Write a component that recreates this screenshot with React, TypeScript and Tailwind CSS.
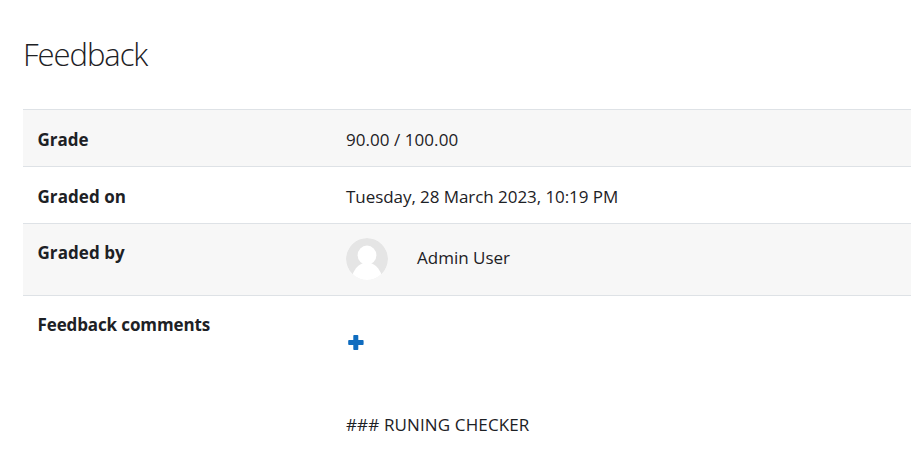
import type { ReactNode } from "react";

function Row({ label, labelClass, shaded, height, children }: {
  label: string;
  labelClass: string;
  shaded?: boolean;
  height: string;
  children: ReactNode;
}) {
  return (
    <tr className={`border-t border-[#dee2e6] align-top ${height} ${shaded ? "bg-[#f7f7f7]" : "bg-white"}`}>
      <th scope="row" className={`w-[308px] pl-[14.5px] text-left font-bold whitespace-nowrap ${labelClass}`}>
        {label}
      </th>
      <td className="pt-[17px] pl-[15px] whitespace-nowrap">{children}</td>
    </tr>
  );
}

function Avatar() {
  return (
    <svg viewBox="0 0 42 42" className="h-[42px] w-[42px] rounded-full">
      <circle cx="21" cy="21" r="21" fill="#e5e5e5" />
      <ellipse cx="21" cy="17.2" rx="9.4" ry="9.6" fill="#fff" />
      <path d="M6.5 36.5C9 30 13.5 26 17 25.2h8c3.5.8 8 4.8 10.5 11.3A21 21 0 0 1 6.5 36.5Z" fill="#fff" />
    </svg>
  );
}

function PlusIcon() {
  return (
    <svg viewBox="0 0 16 15" className="h-[15px] w-4 fill-[#0f6cbf]">
      <path d="M6.1 0h3.4q.8 0 .8.8V5h4.400q.9 0 .9.8v3.400q0 .8-.9.8h-4.400v4.200q0 .8-.8.8H6.100q-.8 0-.8-.8V10H1.100q-.9 0-.9-.8V5.800q0-.8.9-.8h4.200V.8q0-.8.8-.8Z" />
    </svg>
  );
}

export default function App() {
  return (
    <main className="h-[467px] overflow-hidden bg-white pt-[33px] pl-[23px] font-['Open_Sans','Noto_Sans',sans-serif] text-[17px] leading-[26px] text-[#1d2125]">
      <h3 className="h-[76px] text-[31px] leading-[42px] font-light tracking-[-1.05px]">Feedback</h3>
      <table className="w-full table-fixed border-collapse">
        <tbody>
          <Row label="Grade" labelClass="pt-[17px]" height="h-[57px]" shaded>
            <span className="tracking-[0.05px]">90.00 / 100.00</span>
          </Row>
          <Row label="Graded on" labelClass="pt-[17px] tracking-[0.06px]" height="h-[57px]">
            <span className="tracking-[-0.06px]">Tuesday, 28 March 2023, 10:19 PM</span>
          </Row>
          <Row label="Graded by" labelClass="pt-4 tracking-[0.06px]" height="h-[72px]" shaded>
            <div className="-mt-[3px] flex items-center gap-[29px]">
              <Avatar />
              <span className="-mt-0.5">Admin User</span>
            </div>
          </Row>
          <Row label="Feedback comments" labelClass="pt-4 tracking-[-0.12px]" height="h-[172px]">
            <div className="flex h-[60px] items-start pt-[22px] pl-[2px]">
              <PlusIcon />
            </div>
            <p className="mt-[39px] tracking-[0.13px]">### RUNING CHECKER</p>
          </Row>
        </tbody>
      </table>
    </main>
  );
}
